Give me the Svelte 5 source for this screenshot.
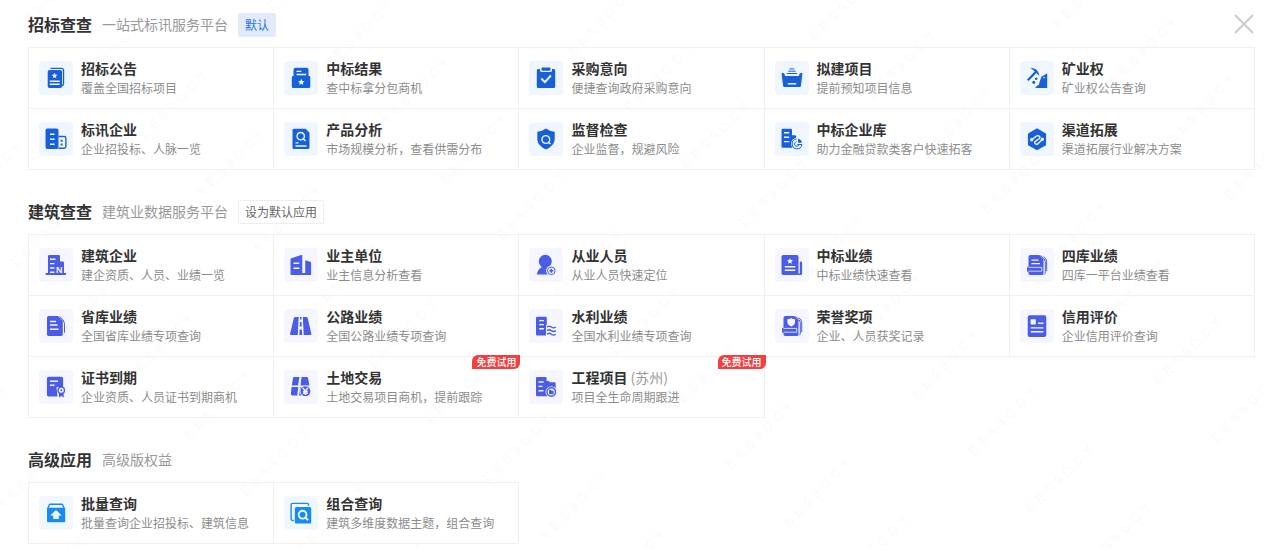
<script lang="ts">
type Layer = [kind: 'fill' | 'hole' | 'line' | 'cut' | 'thin', d: string];

interface Item {
	title: string;
	desc: string;
	icon: string;
	note?: string;
	trial?: boolean;
}

interface Group {
	title: string;
	desc: string;
	theme: 'blue' | 'indigo' | 'sky';
	action?: 'default' | 'set';
	items: Item[];
}

const box = (x: number, y: number, w: number, h: number, r = 1) =>
	`M${x + r} ${y}h${w - 2 * r}a${r} ${r} 0 0 1 ${r} ${r}v${h - 2 * r}a${r} ${r} 0 0 1 ${-r} ${r}h${2 * r - w}a${r} ${r} 0 0 1 ${-r} ${-r}v${2 * r - h}a${r} ${r} 0 0 1 ${r} ${-r}z`;

const disc = (x: number, y: number, r: number) =>
	`M${x - r} ${y}a${r} ${r} 0 1 0 ${2 * r} 0a${r} ${r} 0 1 0 ${-2 * r} 0z`;

function star(x: number, y: number, r: number) {
	const points = Array.from({ length: 10 }, (_, i) => {
		const radius = i % 2 ? r * 0.48 : r;
		const angle = (i * Math.PI) / 5 - Math.PI / 2;
		return `${(x + radius * Math.cos(angle)).toFixed(2)} ${(y + radius * Math.sin(angle)).toFixed(2)}`;
	});
	return `M${points.join('L')}z`;
}

const icons: Record<string, Layer[]> = {
	notice: [
		['line', 'M11.5 7.4h11a2 2 0 0 1 2 2v13.4a2 2 0 0 1-1.5 1.9'],
		['fill', box(8.7, 9, 14.3, 18, 1.8)],
		['hole', star(15.6, 14.8, 3)],
		['cut', 'M10.7 20.2h10M10.7 23.2h10'],
	],
	result: [
		['fill', box(9.5, 6.8, 15, 14, 2)],
		['fill', 'M9 15h3l1.5 1.8h7L22 15h3a1.3 1.3 0 0 1 1.3 1.3v9.2a1.5 1.5 0 0 1-1.5 1.5H9.3a1.5 1.5 0 0 1-1.5-1.5v-9.2A1.3 1.3 0 0 1 9 15z'],
		['cut', 'M12.5 10.4h4.8M12.5 13.5h9.6'],
		['hole', star(17.3, 21.2, 3.4)],
	],
	intent: [
		['fill', box(7.8, 8, 18.4, 19, 1.5)],
		['hole', 'M11 7.5h12v2a1.8 1.8 0 0 1-1.8 1.5h-8.4A1.8 1.8 0 0 1 11 9.5z'],
		['fill', box(12.5, 6.5, 9, 3.2, 0.8)],
		['check', 'M12.3 17.5l3.6 3.6 6-6.6'] as unknown as Layer,
	],
	planned: [
		['thin', 'M14.5 7.9h4.8M13.2 10.2h7.5M11.8 12.5h10.4'],
		['fill', 'M7.2 11.8l2.2.7.7 2.5h13.8l.7-2.5 2.2-.7q.8.2.6 1.2l-1.5 12q-.2 1-1.2 1H9.3q-1 0-1.2-1L6.6 13q-.1-1 .6-1.2z'],
		['cut', 'M12.8 22.8h8.4'],
	],
	mining: [
		['thick', 'M7.8 19.3l8-8.3'] as unknown as Layer,
		['fill', 'M10.3 6.8c5.2.2 8.7 3.1 9 8.3l-2.5-2.7-3.6-3.3z'],
		['fill', 'M27.2 12.3V27H15.2l1.8-2.2 1.7-.8 1.1-3.5 1.7-5q3-1.300 5.700-3.200z'],
		['fill', disc(16.2, 17.8, 1.3)],
		['fill', disc(13.8, 21.3, 1.6)],
		['hole', disc(24, 16.5, 0.8)],
	],
	company: [
		['fill', box(6.5, 6.5, 13, 20.5, 1.8)],
		['line', 'M19.5 14.5h5.7a1.7 1.7 0 0 1 1.7 1.7v8.3a1.7 1.7 0 0 1-1.7 1.7h-5.7'],
		['cut', 'M11 12.2h4.6M11 17.2h4.6M11 22.2h4.6'],
		['fill', box(21.6, 17.8, 2, 2, 0.3)],
		['fill', box(21.6, 21.5, 2, 2, 0.3)],
	],
	product: [
		['fill', 'M10 6.8h11.7l3.8 4v14.7a1.5 1.5 0 0 1-1.5 1.5H10a1.5 1.5 0 0 1-1.5-1.5V8.3A1.5 1.5 0 0 1 10 6.8z'],
		['cut', `${disc(16.7, 14.2, 3.7)}M19.5 17l2 2M11.5 20.9h3M11.5 24h11`],
	],
	monitor: [
		['fill', 'M17 6.5q3.8 2.8 8.7 3.2v8q-.6 6-8.7 9.8-8.100-3.800-8.700-9.800v-8Q13.2 9.3 17 6.5z'],
		['cut', `${disc(16.8, 17.5, 3.9)}M19.8 20.3l1.7 1.7`],
	],
	library: [
		['fill', box(6.5, 6.8, 10.5, 19, 1.2)],
		['fill', 'M16 13.2h4a1 1 0 0 1 1 1v11.6h-5z'],
		['cut', 'M9 10.8h5.2M9 15.2h5.2M9 19.6h5.2'],
		['hole', disc(22, 21.8, 6)],
		['thin', 'M21.5 17a4.9 4.9 0 1 0 5.4 5.5h-4.5'],
		['thin', 'M21.5 19.7a2.3 2.3 0 1 0 2.4 3.3'],
		['fill', 'M23 16.8a5 5 0 0 1 4 4h-4z'],
	],
	channel: [
		['fill', 'M17 6.3l8.5 4.9q.6.4.6 1.1v10q0 .7-.6 1.1L17 28.3l-8.5-4.9q-.6-.4-.6-1.1v-10q0-.7.6-1.1z'],
		['cut', 'M11.7 17.7l4.700-3.600q1.600-1 2.900.2t-.2 2.400l-3.700 2.700q-1.300 1-.2 2.200t2.700.2l4.400-4.200'],
		['hole', disc(11.7, 17.7, 1.7)],
		['hole', disc(22.3, 17.3, 1.7)],
	],
	builder: [
		['fill', 'M10.2 7h9.6q1.2 0 1.2 1.2v5.3h2.8q1.2 0 1.2 1.2V25H27v2H6.7v-2H9V8.2Q9 7 10.2 7z'],
		['cut', 'M11 11.2h5.5M11 15.6h4.5M11 20h4.5M11 24.2h4.500'],
	],
	owner: [
		['fill', 'M7.5 10.3L17 7q1.300-.3 1.300 1v17h2.900V13q0-1 1-.6l4 1.300q.9.300.9 1.300v12H7.500q-1 0-1-1V11.600q0-1 1-1.300z'],
		['cut', 'M9.5 15.3h5.8M9.5 20.2h5.8'],
	],
	staff: [
		['fill', disc(16.3, 13.3, 6.5)],
		['fill', 'M12.5 17.5v2Q8.8 21 7.8 26.5h13l1-8z'],
		['hole', disc(22.3, 22.8, 5.2)],
		['thin', disc(22.3, 22.8, 3.8)],
		['fill', 'M21.5 20.8h1.6V22h1.200v1.600h-1.200v1.200h-1.600v-1.200h-1.200V22h1.200z'],
	],
	bid: [
		['fill', box(6.5, 7, 17, 20, 1.8)],
		['fill', 'M24.8 13.5h1q1.3 0 1.3 1.3v11q0 1.2-1.3 1.2H20v-1.5h4.8z'],
		['hole', star(15, 13.3, 3.1)],
		['cut', 'M9.8 18.7h10.5M9.8 22.3h10.5'],
	],
	archive: [
		['fill', 'M10.5 7h8.8l4.2 4.2v14.3q0 1.5-1.5 1.5H10.2q-1.7 0-1.7-1.7V9q0-2 2-2z'],
		['thin', 'M20.5 7.5q5 3.5 4.8 6v10.3q0 1.500-.8 2.500M23.800 8.700q3 2 2.900 5v9.500'],
		['cut', 'M11.5 12.1h7M11.5 15.6h8.5'],
		['fill', box(7, 18.8, 15, 5.2, 1.2)],
		['groove', 'M8.5 19.4H21.8v3.8H8.5'] as unknown as Layer,
	],
	province: [
		['fill', 'M9.8 7H19l4.8 4.8v13.5q0 1.7-1.7 1.7H9.600q-1.600 0-1.600-1.700V8.800Q8 7 9.800 7z'],
		['thin', 'M20.5 7.5q5 3.4 5 7v9.3'],
		['cut', 'M11 12.5h6M11 16h7.5M11 20.3h8.5'],
	],
	road: [
		['fill', 'M11.2 8h3.5l-.9 18H7q-1.2 0-.9-1.2l3.7-15.6Q10.1 8 11.2 8z'],
		['fill', 'M18.8 8h3.5q1.1 0 1.4 1.2l3.7 15.6q.3 1.2-.9 1.2h-6.800z'],
		['fill', 'M16 8h1.5v2.5H16zM15.9 13h1.7l.2 4.5h-2.1zM15.6 20.5h2.3l.3 5.5h-2.9z'],
	],
	water: [
		['fill', box(7, 7.8, 10.8, 18.7, 1.2)],
		['cut', 'M10.2 11.6h4.7M10.2 15.6h4.7M10.2 19.8h4.7'],
		['hole', 'M17 16h2v11h-2z'],
		['line', 'M18 18q2-1.8 4.3 0t4.5 0M18 21.6q2-1.8 4.3 0t4.5 0M18 25.2q2-1.8 4.3 0t4.5 0'],
	],
	honor: [
		['fill', 'M10.5 7h8.8l4.2 4.2v14.3q0 1.5-1.5 1.5H10.2q-1.7 0-1.7-1.7V9q0-2 2-2z'],
		['thin', 'M20.5 7.5q5 3.5 4.8 6v10.3q0 1.500-.8 2.500M23.800 8.700q3 2 2.900 5v9.500'],
		['hole', 'M16.2 9q1.5 1.2 3.8 1.3v3.2q-.3 2.6-3.8 4-3.500-1.400-3.800-4v-3.200q2.300-.1 3.800-1.300z'],
		['fill', box(7, 18.8, 15, 5.2, 1.2)],
		['groove', 'M8.5 19.4H21.8v3.8H8.5'] as unknown as Layer,
	],
	credit: [
		['fill', box(7.7, 6.2, 18.6, 21.8, 2)],
		['hole', box(10.6, 10.2, 5.2, 5.2, 0.6)],
		['cut', 'M18 14.3h5.5M10.8 18.9h12.6M10.8 22.7h12.6'],
	],
	certificate: [
		['fill', box(7.9, 6.8, 16.2, 19.8, 1.8)],
		['cut', 'M11 11.2h8M11 15.2h4.5'],
		['hole', 'M17.5 17h8v11h-6.8z'],
		['line', disc(22.3, 20.3, 3.2)],
		['fill', disc(22.3, 20.3, 1)],
		['fill', 'M20 23.5h4.7v4l-2.3-1.4-2.4 1.4z'],
	],
	land: [
		['fill', 'M10 7h5.5L14 15.5H7.8L9 8q.2-1 1-1zM17.5 7h5.3q1 0 1.2 1l1.5 7.5h-9zM7.5 17h6.8l-1 8.5h-5q-1.5 0-1.4-1.4zM16.2 17h9.3l.5 8.5H15z'],
		['hole', disc(21.4, 21.3, 5.8)],
		['fill', disc(21.4, 21.3, 5)],
		['cut', 'M18.8 17.9l2.6 3.1 2.6-3.1M21.4 21v4M19 21.5h4.8M19 23.300h4.800'],
	],
	project: [
		['fill', 'M8.2 7h8.2q1.2 0 1.2 1.2V11h2l1.5 1.2h4.3q1.3 0 1.3 1.3V22l-5 4.2H8.2Q7 26.2 7 25V8.2Q7 7 8.2 7z'],
		['cut', 'M9.5 12h5M9.5 16.4h4M9.5 20.8h5'],
		['hole', disc(22.3, 22, 5.8)],
		['line', disc(22.3, 22, 4.3)],
		['fill', 'M20 19.8h2l.7.9h2v3.5H20z'],
	],
	upload: [
		['line', 'M8.8 12.5l1.5-3.5q.3-.7 1-.7h11.4q.7 0 1 .7l1.5 3.5'],
		['fill', box(8, 11.8, 18.2, 14.4, 1)],
		['hole', 'M17 14l5.8 5.5h-3V23h-5.600v-3.500h-3z'],
	],
	combine: [
		['line', 'M9.8 24.5H8.5q-1.4 0-1.4-1.4V8.8q0-1.4 1.4-1.4h14.7q1.4 0 1.4 1.4v1'],
		['fill', box(10.8, 11, 16.4, 16.4, 1.5)],
		['check', `${disc(18.6, 18.7, 3.9)}M21.5 21.5l2.6 2.6`] as unknown as Layer,
	],
};

const groups: Group[] = [
	{
		title: '招标查查',
		desc: '一站式标讯服务平台',
		theme: 'blue',
		action: 'default',
		items: [
			{ title: '招标公告', desc: '覆盖全国招标项目', icon: 'notice' },
			{ title: '中标结果', desc: '查中标拿分包商机', icon: 'result' },
			{ title: '采购意向', desc: '便捷查询政府采购意向', icon: 'intent' },
			{ title: '拟建项目', desc: '提前预知项目信息', icon: 'planned' },
			{ title: '矿业权', desc: '矿业权公告查询', icon: 'mining' },
			{ title: '标讯企业', desc: '企业招投标、人脉一览', icon: 'company' },
			{ title: '产品分析', desc: '市场规模分析，查看供需分布', icon: 'product' },
			{ title: '监督检查', desc: '企业监督，规避风险', icon: 'monitor' },
			{ title: '中标企业库', desc: '助力金融贷款类客户快速拓客', icon: 'library' },
			{ title: '渠道拓展', desc: '渠道拓展行业解决方案', icon: 'channel' },
		],
	},
	{
		title: '建筑查查',
		desc: '建筑业数据服务平台',
		theme: 'indigo',
		action: 'set',
		items: [
			{ title: '建筑企业', desc: '建企资质、人员、业绩一览', icon: 'builder' },
			{ title: '业主单位', desc: '业主信息分析查看', icon: 'owner' },
			{ title: '从业人员', desc: '从业人员快速定位', icon: 'staff' },
			{ title: '中标业绩', desc: '中标业绩快速查看', icon: 'bid' },
			{ title: '四库业绩', desc: '四库一平台业绩查看', icon: 'archive' },
			{ title: '省库业绩', desc: '全国省库业绩专项查询', icon: 'province' },
			{ title: '公路业绩', desc: '全国公路业绩专项查询', icon: 'road' },
			{ title: '水利业绩', desc: '全国水利业绩专项查询', icon: 'water' },
			{ title: '荣誉奖项', desc: '企业、人员获奖记录', icon: 'honor' },
			{ title: '信用评价', desc: '企业信用评价查询', icon: 'credit' },
			{ title: '证书到期', desc: '企业资质、人员证书到期商机', icon: 'certificate' },
			{ title: '土地交易', desc: '土地交易项目商机，提前跟踪', icon: 'land', trial: true },
			{ title: '工程项目', desc: '项目全生命周期跟进', icon: 'project', note: '(苏州)', trial: true },
		],
	},
	{
		title: '高级应用',
		desc: '高级版权益',
		theme: 'sky',
		items: [
			{ title: '批量查询', desc: '批量查询企业招投标、建筑信息', icon: 'upload' },
			{ title: '组合查询', desc: '建筑多维度数据主题，组合查询', icon: 'combine' },
		],
	},
];
</script>

<main class="panel">
	<svg class="watermark" aria-hidden="true">
		<defs>
			<pattern
				id="mark"
				width="181"
				height="81"
				patternUnits="userSpaceOnUse"
				patternTransform="translate(773 515) rotate(-45)"
			>
				<text x="2" y="20">E E S 9 G C Y</text>
			</pattern>
		</defs>
		<rect width="100%" height="100%" fill="url(#mark)" />
	</svg>

	{#each groups as group, index (group.title)}
		<section class="group {group.theme}">
			<header class="head">
				<h2>{group.title}</h2>
				<p>{group.desc}</p>
				{#if group.action === 'default'}
					<span class="current">默认</span>
				{:else if group.action === 'set'}
					<button type="button" class="set-default">设为默认应用</button>
				{/if}
				{#if index === 0}
					<button type="button" class="close" aria-label="关闭">
						<svg viewBox="0 0 20 20" width="20" height="20">
							<path d="M1.5 1.5l17 17M18.5 1.5l-17 17" />
						</svg>
					</button>
				{/if}
			</header>

			<nav class="grid" aria-label={group.title}>
				{#each group.items as item (item.title)}
					<a class="item" href="#{item.icon}">
						<svg class="icon" viewBox="0 0 34 34" aria-hidden="true">
							{#each icons[item.icon] as [kind, d]}
								<path class={kind} {d} />
							{/each}
							{#if item.icon === 'builder'}
								<text class="letter" x="17" y="24.5">N</text>
							{/if}
						</svg>
						<span class="text">
							<span class="title">
								{item.title}
								{#if item.note}<span class="note">{item.note}</span>{/if}
							</span>
							<span class="desc">{item.desc}</span>
						</span>
						{#if item.trial}
							<span class="trial">免费试用</span>
						{/if}
					</a>
				{/each}
			</nav>
		</section>
	{/each}
</main>

<style>
:global(body) {
	margin: 0;
	background: #fff;
}

.panel {
	position: relative;
	box-sizing: border-box;
	min-height: 100vh;
	padding: 13px 14px 4px 28px;
	font-family: "Noto Sans CJK SC", "Noto Sans", sans-serif;
	font-size: 12px;
	color: #333;
	overflow: hidden;
}

.watermark {
	position: absolute;
	inset: 0;
	width: 100%;
	height: 100%;
	pointer-events: none;
}

.watermark text {
	font: bold 14px "Liberation Sans", sans-serif;
	fill: #fbfbfb;
}

.group {
	position: relative;
}

.group + .group {
	margin-top: 30px;
}

.blue {
	--main: #1860d8;
	--tile: #f0f6ff;
}

.indigo {
	--main: #4b5ce6;
	--tile: #f5f6ff;
}

.sky {
	--main: #168bf0;
	--tile: #f0f7ff;
}

.head {
	display: flex;
	align-items: center;
	gap: 10px;
	height: 24px;
	margin-bottom: 10px;
}

h2,
p {
	margin: 0;
	line-height: 22px;
	padding-bottom: 2px;
}

h2 {
	font-size: 16px;
	font-weight: 700;
}

p {
	font-size: 14px;
	color: #999;
}

.current,
.set-default {
	box-sizing: border-box;
	height: 24px;
	padding: 0 6px;
	border: 1px solid #eee;
	border-radius: 2px;
	background: #fff;
	font: inherit;
	line-height: 22px;
	color: #666;
}

.current {
	border-color: #e1ebfb;
	background: #e1ebfb;
	color: #2a70e6;
}

.close {
	display: flex;
	margin-left: auto;
	padding: 0 0 2px;
	border: 0;
	background: none;
	cursor: pointer;
}

.close path {
	fill: none;
	stroke: #ccc;
	stroke-width: 2;
	stroke-linecap: round;
}

.set-default {
	cursor: pointer;
}

.grid {
	display: grid;
	grid-template-columns: repeat(5, 1fr);
	padding-bottom: 1px;
}

/* neighbours share one border line */
.item {
	position: relative;
	display: flex;
	align-items: center;
	gap: 8px;
	margin: 0 -1px -1px 0;
	padding: 10px;
	border: 1px solid #f0f0f0;
	color: inherit;
	text-decoration: none;
}

.icon {
	flex: none;
	width: 34px;
	height: 34px;
	border-radius: 4px;
	background: var(--tile);
}

.fill {
	fill: var(--main);
}

.hole {
	fill: var(--tile);
}

.line,
.thin,
.thick,
.cut,
.check,
.groove {
	fill: none;
	stroke: var(--main);
	stroke-width: 1.4;
}

.thin {
	stroke-width: 1;
}

.thick {
	stroke-width: 2.2;
}

.cut,
.check,
.groove {
	stroke: var(--tile);
}

.check {
	stroke-width: 1.9;
}

.groove {
	stroke-width: 0.8;
}

.letter {
	font: bold 9px "Liberation Sans", sans-serif;
	fill: var(--tile);
}

.text {
	display: flex;
	flex-direction: column;
	white-space: nowrap;
}

.title {
	font-size: 14px;
	font-weight: 700;
	line-height: 20px;
}

.note {
	font-weight: 400;
	color: #999;
}

.desc {
	line-height: 20px;
	color: #8c8c8c;
}

.trial {
	position: absolute;
	top: -2px;
	right: -2px;
	z-index: 1;
	padding: 0 4px;
	border-radius: 6px 0 6px 0;
	background: #f43f40;
	font-size: 10px;
	font-weight: 500;
	line-height: 14px;
	color: #fff;
}
</style>
